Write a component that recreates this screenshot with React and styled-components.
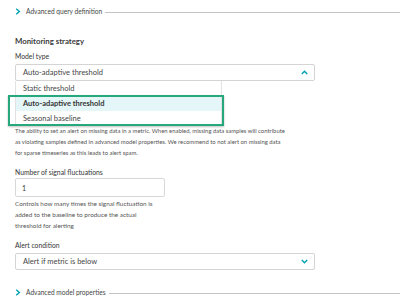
import React from "react";
import styled, { createGlobalStyle } from "styled-components";

const Global = createGlobalStyle`
  html, body { margin: 0; padding: 0; background: #fff; }
  body { font-family: "Lato", "Open Sans", sans-serif; color: #454646; }
`;

const Page = styled.div`
  width: 400px;
  height: 306px;
  overflow: hidden;
  padding-left: 15px;
  box-sizing: border-box;
  display: flex;
  flex-direction: column;
`;

const Toggle = styled.div`
  display: flex;
  align-items: center;
  height: 12px;
  margin-top: ${(p) => p.$mt}px;
  font-size: 6.6px;
  color: #454646;
  white-space: nowrap;
`;

const Chev = styled.svg`
  width: 6px;
  height: 7px;
  margin-right: 5px;
  flex: none;
`;

const Rule = styled.div`
  flex: 1;
  height: 1px;
  background: #c4c4c4;
  margin-left: 3px;
  margin-top: 2px;
`;

const Heading = styled.div`
  font-size: 7.8px;
  font-weight: 700;
  color: #3a3a3a;
  margin-top: ${(p) => p.$mt}px;
  line-height: 12px;
`;

const Label = styled.div`
  font-size: 6.8px;
  color: #353535;
  line-height: 10px;
  margin-top: ${(p) => p.$mt}px;
`;

const SelectWrap = styled.div`
  position: relative;
  width: 300px;
  margin-top: ${(p) => p.$mt}px;
`;

const SelectBox = styled.div`
  height: 17px;
  box-sizing: border-box;
  border: 1px solid #d4d4d4;
  border-radius: 2px;
  display: flex;
  align-items: center;
  justify-content: space-between;
  padding: 0 6px 0 7px;
  font-size: 7.5px;
  color: #454646;
  background: #fff;
`;

const Menu = styled.div`
  position: absolute;
  top: 17px;
  left: 0;
  width: 207px;
  background: #fff;
  border: 1px solid #e2e2e2;
  border-top: none;
  box-sizing: border-box;
  z-index: 2;
`;

const Item = styled.div`
  height: ${(p) => p.$h}px;
  display: flex;
  align-items: center;
  padding-left: 7px;
  font-size: 7.5px;
  font-weight: ${(p) => (p.$active ? 700 : 400)};
  color: ${(p) => (p.$active ? "#353535" : "#454646")};
  background: ${(p) => (p.$active ? "#e4f6f8" : "#fff")};
`;

const Highlight = styled.div`
  position: absolute;
  left: -7px;
  top: 31px;
  width: 216px;
  height: 31px;
  border: 2px solid #27a87c;
  box-sizing: border-box;
  box-shadow: 0 1px 2px rgba(0, 0, 0, 0.25);
  z-index: 3;
`;

const Para = styled.div`
  font-size: ${(p) => p.$fs}px;
  line-height: 11px;
  color: #555;
  margin-top: ${(p) => p.$mt}px;
  white-space: nowrap;
`;

const Input = styled.div`
  width: 150px;
  height: 19px;
  box-sizing: border-box;
  border: 1px solid #d8d8d8;
  border-radius: 2px;
  display: flex;
  align-items: center;
  padding-left: 6px;
  font-size: 7px;
  color: #353535;
  margin-top: ${(p) => p.$mt}px;
`;

const ChevronRight = () => (
  <Chev viewBox="0 0 6 7">
    <path d="M1.2 0.8 L4.4 3.5 L1.2 6.2" fill="none" stroke="#00a1b2" strokeWidth="1.4" />
  </Chev>
);

const Caret = ({ up }) => (
  <svg width="7" height="5" viewBox="0 0 7 5">
    <path
      d={up ? "M0.8 4 L3.5 1.2 L6.2 4" : "M0.8 1 L3.5 3.8 L6.2 1"}
      fill="none"
      stroke="#00a1b2"
      strokeWidth="1.4"
    />
  </svg>
);

export default function App() {
  return (
    <>
      <Global />
      <Page>
        <Toggle $mt={5}>
          <ChevronRight />
          Advanced query definition
          <Rule />
        </Toggle>
        <Heading $mt={18}>Monitoring strategy</Heading>
        <Label $mt={4}>Model type</Label>
        <SelectWrap $mt={3}>
          <SelectBox>
            Auto-adaptive threshold
            <Caret up />
          </SelectBox>
          <Menu>
            <Item $h={15}>Static threshold</Item>
            <Item $h={15} $active>Auto-adaptive threshold</Item>
            <Item $h={14}>Seasonal baseline</Item>
          </Menu>
          <Highlight />
        </SelectWrap>
        <Para $mt={44} $fs={5.9}>
          The ability to set an alert on missing data in a metric. When enabled, missing data samples will contribute
          <br />
          as violating samples defined in advanced model properties. We recommend to not alert on missing data
          <br />
          for sparse timeseries as this leads to alert spam.
        </Para>
        <Label $mt={9}>Number of signal fluctuations</Label>
        <Input $mt={1}>1</Input>
        <Para $mt={1} $fs={6.4}>
          Controls how many times the signal fluctuation is
          <br />
          added to the baseline to produce the actual
          <br />
          threshold for alerting
        </Para>
        <Label $mt={9}>Alert condition</Label>
        <SelectWrap $mt={3}>
          <SelectBox>
            Alert if metric is below
            <Caret />
          </SelectBox>
        </SelectWrap>
        <Toggle $mt={16}>
          <ChevronRight />
          Advanced model properties
          <Rule />
        </Toggle>
      </Page>
    </>
  );
}
